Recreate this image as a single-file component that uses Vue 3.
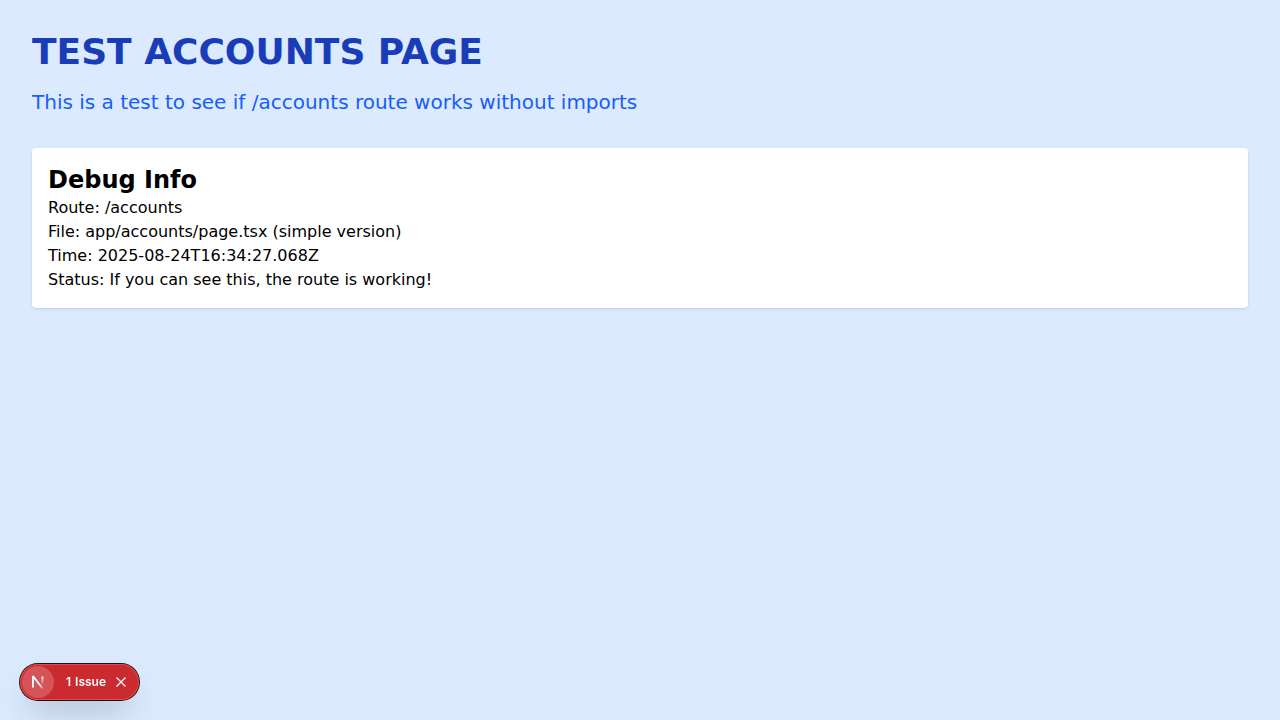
<script setup>
const details = [
  'Route: /accounts',
  'File: app/accounts/page.tsx (simple version)',
  'Time: 2025-08-24T16:34:27.068Z',
  'Status: If you can see this, the route is working!',
]
</script>

<template>
  <main class="page">
    <h1 class="title">TEST ACCOUNTS PAGE</h1>
    <p class="lead">This is a test to see if /accounts route works without imports</p>
    <section class="card">
      <h2 class="card-title">Debug Info</h2>
      <p v-for="line in details" :key="line">{{ line }}</p>
    </section>
  </main>

  <div class="indicator">
    <button class="logo" type="button" aria-label="Open developer tools">
      <svg width="32" height="32" viewBox="0 0 32 32" fill="none" aria-hidden="true">
        <defs>
          <linearGradient id="diagonal" gradientUnits="userSpaceOnUse" x1="9.3" y1="10" x2="13.3" y2="15.2">
            <stop stop-color="#fff" />
            <stop offset="0.8" stop-color="#fff" stop-opacity="0" />
            <stop offset="1" stop-color="#fff" stop-opacity="0" />
          </linearGradient>
          <linearGradient id="stem" gradientUnits="userSpaceOnUse" x1="11.82" y1="1.4" x2="11.79" y2="9.63">
            <stop stop-color="#fff" />
            <stop offset="1" stop-color="#fff" stop-opacity="0" />
          </linearGradient>
        </defs>
        <g transform="translate(8.6 9)">
          <path d="M13.3 15.2 2.34 1v11.6" stroke="url(#diagonal)" stroke-width="1.86" stroke-linejoin="bevel" />
          <path d="M11.825 1.5v11.6" stroke="url(#stem)" stroke-width="1.86" />
        </g>
      </svg>
    </button>
    <button class="issue" type="button"><span>1</span><span>Issue</span></button>
    <button class="close" type="button" aria-label="Dismiss">
      <svg width="12" height="12" viewBox="0 0 12 12" fill="none" aria-hidden="true">
        <path d="M1.5 1.5l9 9M10.5 1.5l-9 9" stroke="#fff" stroke-width="1.2" />
      </svg>
    </button>
  </div>
</template>

<style>
body {
  background: #dbeafe;
}
</style>

<style scoped>
.page {
  box-sizing: border-box;
  min-height: 100vh;
  padding: 32px;
  background: #dbeafe;
  color: #000;
  font-family: "DejaVu Sans", sans-serif;
  font-size: 16px;
  line-height: 24px;
}

h1,
h2,
p {
  margin: 0;
}

.title {
  margin-bottom: 16px;
  color: #193cb8;
  font-size: 36px;
  line-height: 40px;
  font-weight: 700;
}

.lead {
  color: #155dfc;
  font-size: 20px;
  line-height: 28px;
}

.card {
  margin-top: 32px;
  padding: 16px;
  border-radius: 4px;
  background: #fff;
  box-shadow: 0 1px 3px rgba(0, 0, 0, 0.1), 0 1px 2px -1px rgba(0, 0, 0, 0.1);
}

.card-title {
  font-size: 24px;
  line-height: 32px;
  font-weight: 700;
}

.indicator {
  position: fixed;
  left: 20px;
  bottom: 20px;
  display: flex;
  align-items: center;
  box-sizing: border-box;
  height: 36px;
  padding: 2px 8px 2px 2px;
  border-radius: 18px;
  background: #ca2a30;
  box-shadow: 0 0 0 1px #171717, inset 0 0 0 1px #e5484d,
    0 16px 32px -8px rgba(0, 0, 0, 0.24);
}

button {
  margin: 0;
  padding: 0;
  border: 0;
  background: none;
  color: #fff;
  cursor: pointer;
}

.logo {
  width: 32px;
  height: 32px;
  border-radius: 50%;
  background: rgba(255, 255, 255, 0.2);
}

.logo svg,
.close svg {
  display: block;
}

.issue {
  display: flex;
  gap: 4px;
  margin-left: 12px;
  font-family: Inter, sans-serif;
  font-size: 12px;
  line-height: 32px;
  font-weight: 600;
}

.close {
  display: flex;
  align-items: center;
  justify-content: center;
  width: 20px;
  height: 20px;
  margin-left: 5px;
}
</style>
